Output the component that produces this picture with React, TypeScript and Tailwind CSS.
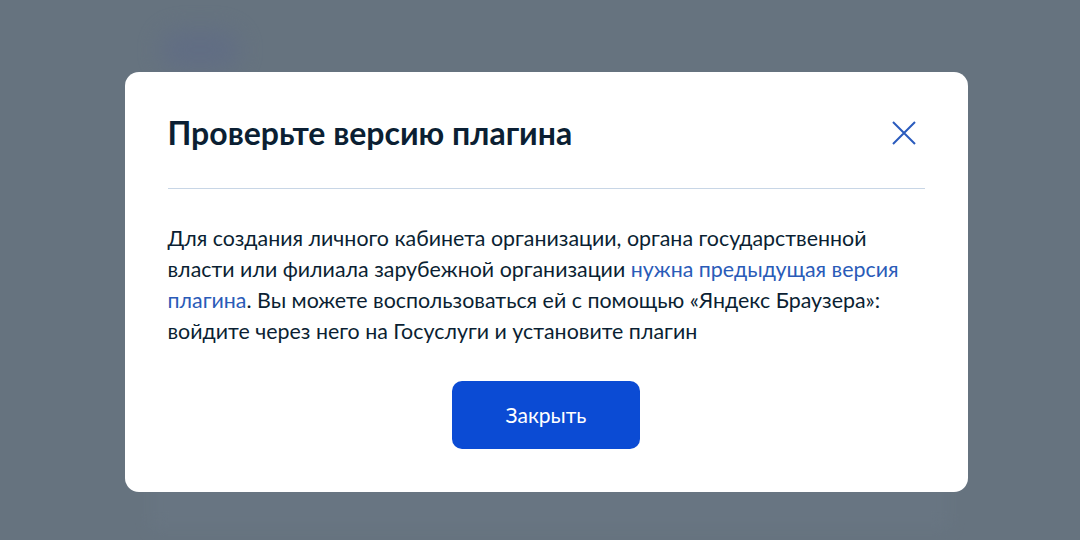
export default function App() {
  return (
    <div
      className="relative w-[1080px] h-[540px] overflow-hidden bg-[#66737f]"
      style={{ fontFamily: 'Lato, "Noto Sans", sans-serif' }}
    >
      {/* blurred page behind the overlay */}
      <div className="absolute left-[160px] top-[30px] w-[80px] h-[40px] rounded-full bg-[#5f6b86] blur-md opacity-70" />
      <div className="absolute left-[150px] top-[470px] w-[800px] h-[60px] bg-[#6a7784] blur-sm opacity-60" />

      <div className="absolute inset-0 flex items-start justify-center pt-[72px] pl-[12px]">
        <div className="w-[843px] h-[420px] bg-white rounded-[14px] px-[43px] pt-[36px] flex flex-col">
          <div className="flex items-center justify-between h-[50px]">
            <h1 className="text-[32px] font-bold text-[#0b1f33]">Проверьте версию плагина</h1>
            <button className="w-[30px] h-[30px] mr-[6px] flex items-center justify-center text-[#2a5bbd]">
              <svg width="24" height="24" viewBox="0 0 24 24" fill="none" stroke="currentColor" strokeWidth="2">
                <path d="M1 1L23 23M23 1L1 23" />
              </svg>
            </button>
          </div>
          <div className="mt-[30px] h-px bg-[#c8d6e6]" />
          <p className="mt-[34px] w-[745px] text-[21.4px] leading-[31px] text-[#0b1f33]">
            Для создания личного кабинета организации, органа государственной власти или филиала зарубежной организации{' '}
            <a className="text-[#2a5bb8]">нужна предыдущая версия плагина</a>. Вы можете воспользоваться ей с помощью
            «Яндекс Браузера»: войдите через него на Госуслуги и установите плагин
          </p>
          <div className="flex justify-center mt-[34px]">
            <button className="w-[188px] h-[68px] rounded-[10px] bg-[#0b4bd4] text-white text-[21px]">Закрыть</button>
          </div>
        </div>
      </div>
    </div>
  );
}
